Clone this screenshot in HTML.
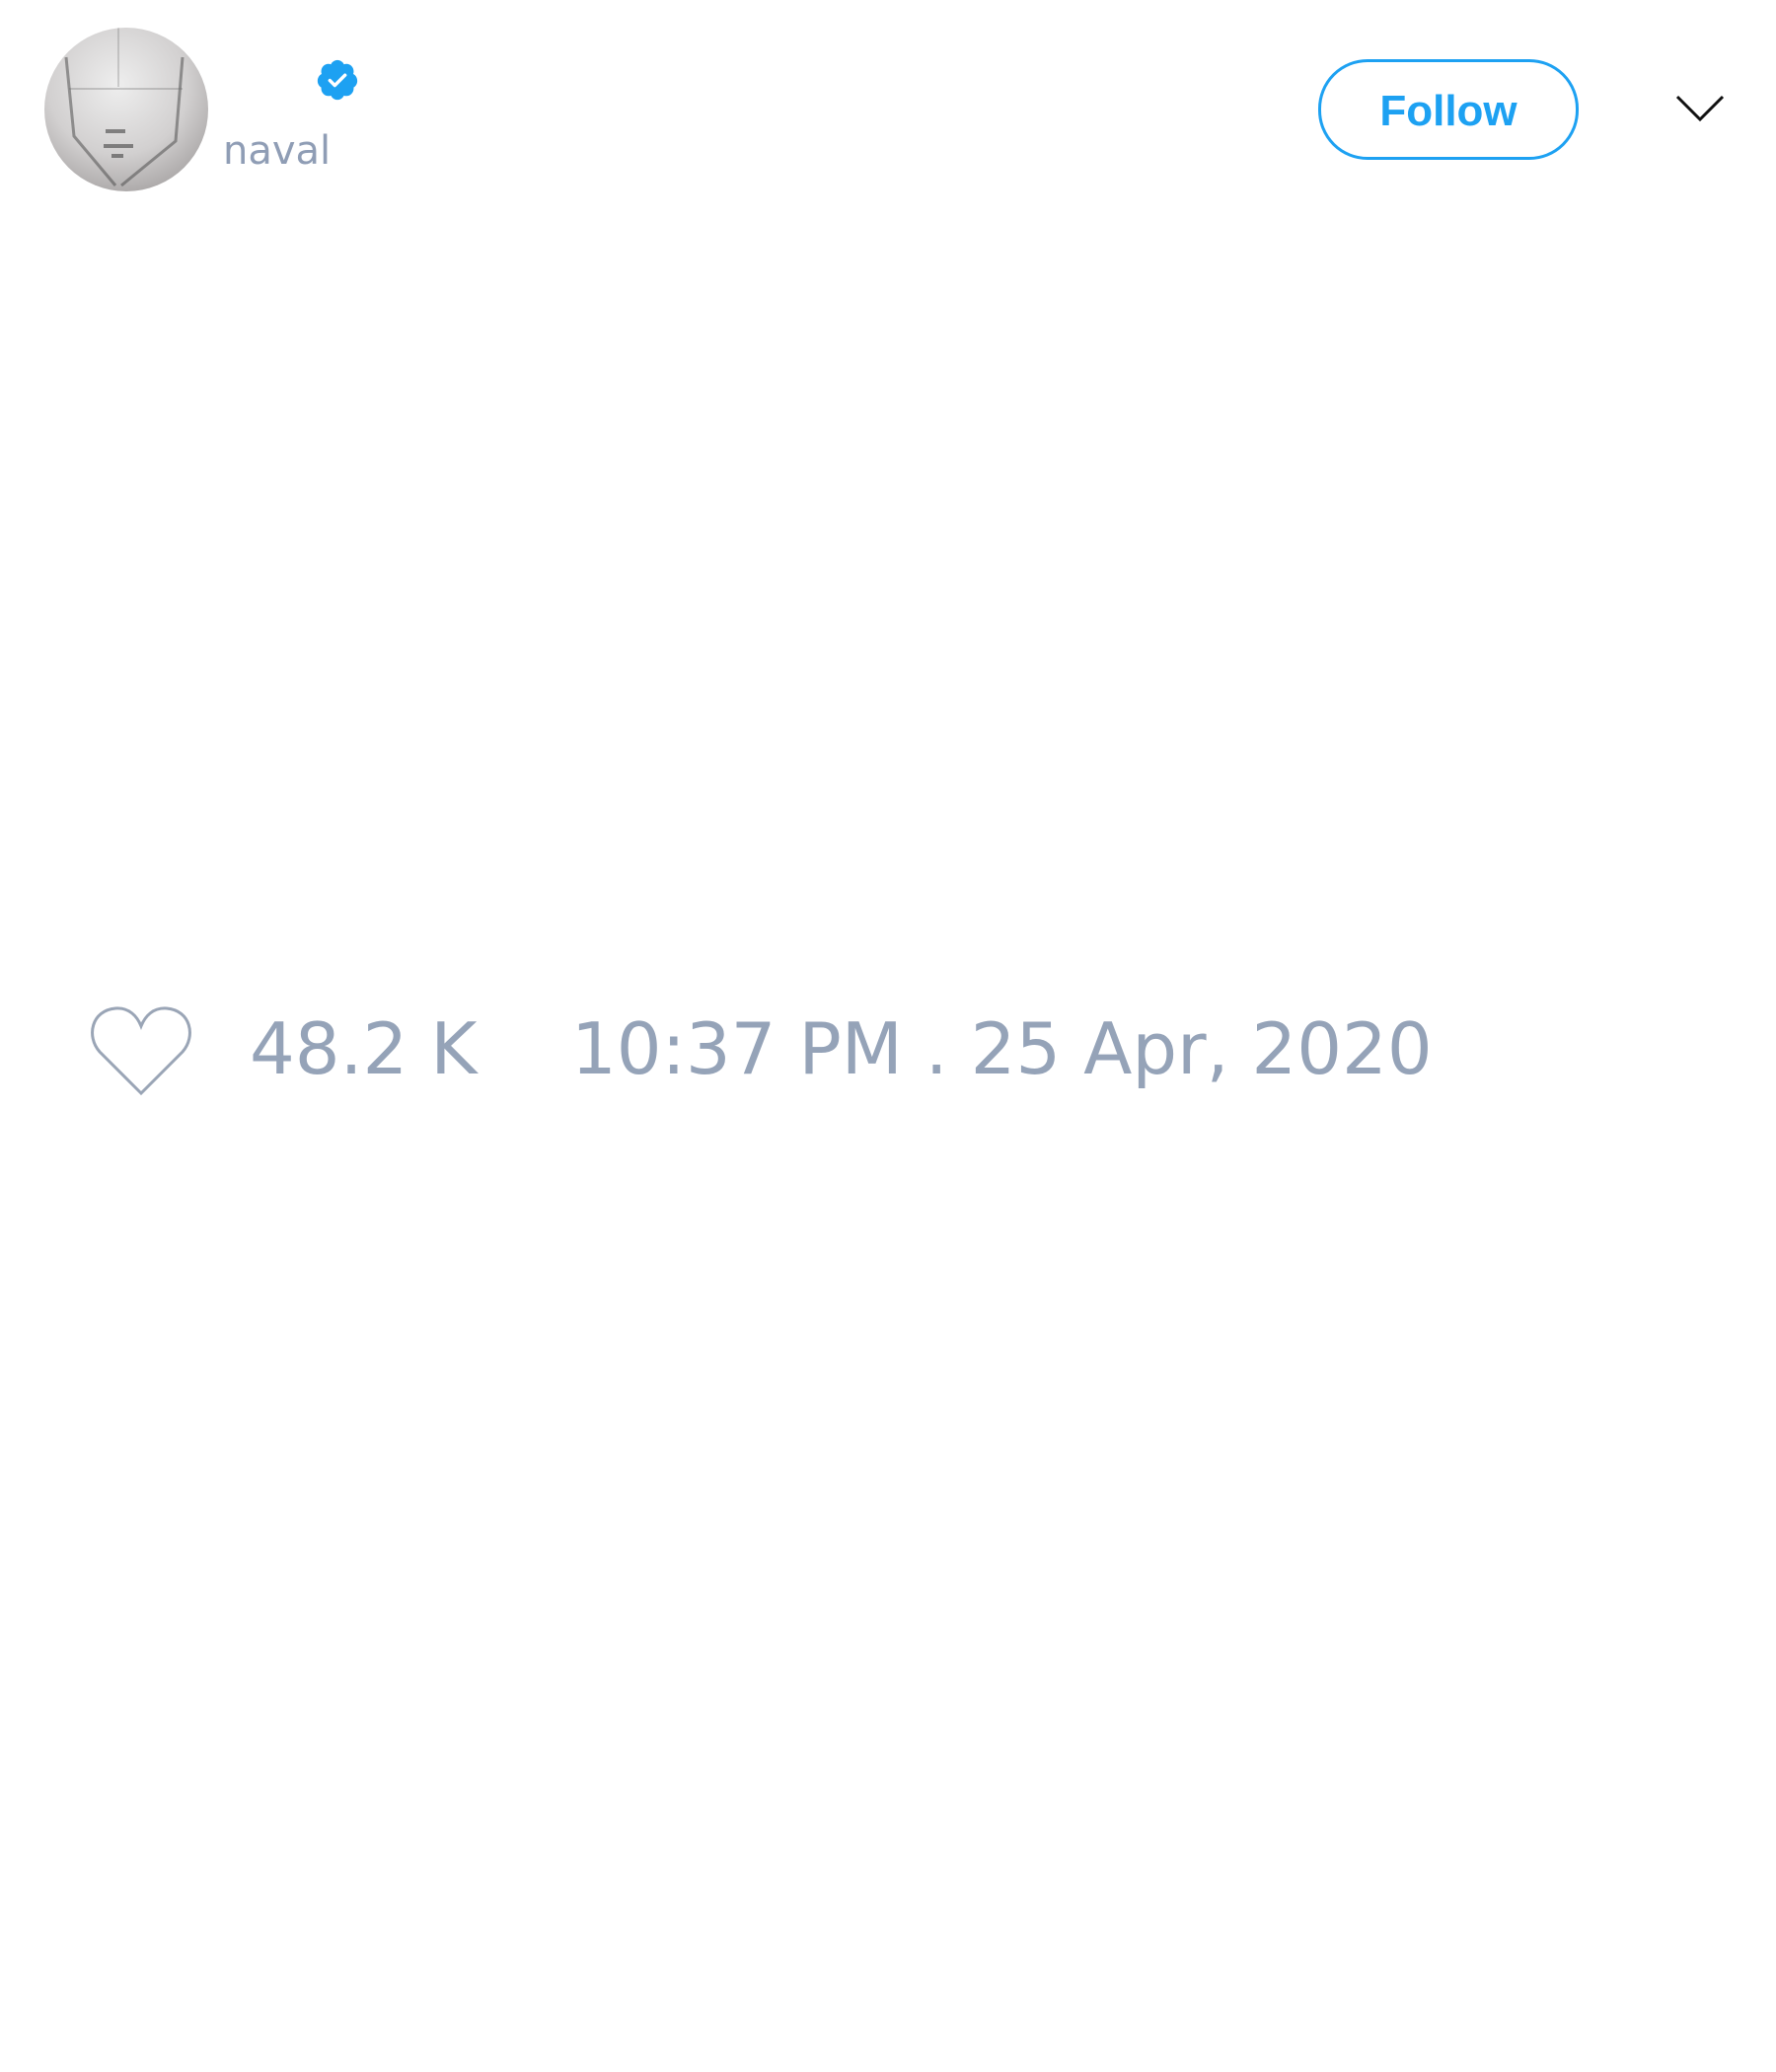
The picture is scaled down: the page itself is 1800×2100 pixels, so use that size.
<!DOCTYPE html>
<html><head><style>
html,body{margin:0;padding:0;background:#fff;width:1800px;height:2100px;overflow:hidden;font-family:"DejaVu Sans","Liberation Sans",sans-serif;}
.abs{position:absolute;}
</style></head><body>
<div class="abs" style="left:45px;top:28px;width:166px;height:166px;border-radius:50%;background:radial-gradient(circle at 45% 35%,#eeeeee 0%,#d2d0d0 50%,#8f8b8b 100%);overflow:hidden;">
<svg width="166" height="166" viewBox="0 0 166 166" style="position:absolute;left:0;top:0">
<path d="M22 30 L30 110 L72 160 M140 30 L133 115 L78 160" stroke="#444" stroke-width="3" fill="none" opacity=".5"/>
<path d="M25 62 L140 62" stroke="#666" stroke-width="2" opacity=".3"/>
<path d="M75 0 L75 60" stroke="#777" stroke-width="2" opacity=".3"/>
<path d="M62 105 L82 105 M60 120 L90 120 M68 130 L80 130" stroke="#444" stroke-width="4" opacity=".6"/>
</svg></div>
<svg class="abs" style="left:319px;top:58px" width="46" height="46" viewBox="0 0 24 24">
<path fill="#1da1f2" d="M22.5 12.5c0-1.58-.875-2.95-2.148-3.6.154-.435.238-.905.238-1.4 0-2.21-1.710-3.998-3.818-3.998-.47 0-.92.084-1.336.25C14.818 2.415 13.51 1.5 12 1.5s-2.816.917-3.437 2.250c-.415-.165-.866-.25-1.336-.25-2.11 0-3.818 1.790-3.818 4 0 .494.083.964.237 1.4-1.272.65-2.147 2.018-2.147 3.6 0 1.495.782 2.798 1.942 3.486-.02.17-.032.34-.032.514 0 2.21 1.708 4 3.818 4 .47 0 .92-.086 1.335-.25.62 1.334 1.926 2.25 3.437 2.25 1.512 0 2.818-.916 3.437-2.25.415.163.865.248 1.336.248 2.11 0 3.818-1.79 3.818-4 0-.174-.012-.344-.033-.513 1.158-.687 1.943-1.990 1.943-3.484z"/>
<path d="M8 12.3l2.6 2.6L16 9.5" stroke="#fff" stroke-width="1.8" fill="none" stroke-linecap="round" stroke-linejoin="round"/>
</svg>
<div class="abs" style="left:226px;top:128px;font-size:40px;line-height:50px;color:#8f9db5;">naval</div>
<div class="abs" style="left:1336px;top:60px;width:258px;height:96px;border:3px solid #1da1f2;border-radius:50px;color:#1da1f2;font-family:'Liberation Sans',sans-serif;font-weight:bold;font-size:44px;line-height:100px;text-align:center;">Follow</div>
<svg class="abs" style="left:1698px;top:94px" width="50" height="32" viewBox="0 0 50 32"><path d="M2 4 L25 27 L48 4" stroke="#111" stroke-width="3" fill="none"/></svg>
<svg class="abs" style="left:89px;top:1018px" width="108" height="94" viewBox="0 0 108 94">
<path d="M54 90 L12 48 C-2 32 4 6 28 4 C42 3 50 12 54 22 C58 12 66 3 80 4 C104 6 110 32 96 48 Z" stroke="#9aa5b6" stroke-width="3" fill="none" stroke-linejoin="miter"/>
</svg>
<div class="abs" style="left:253px;top:1018px;font-size:72px;line-height:90px;color:#95a3b8;white-space:nowrap;">48.2 K</div>
<div class="abs" style="left:579px;top:1018px;font-size:72px;line-height:90px;color:#95a3b8;white-space:nowrap;">10:37 PM . 25 Apr, 2020</div>
</body></html>
